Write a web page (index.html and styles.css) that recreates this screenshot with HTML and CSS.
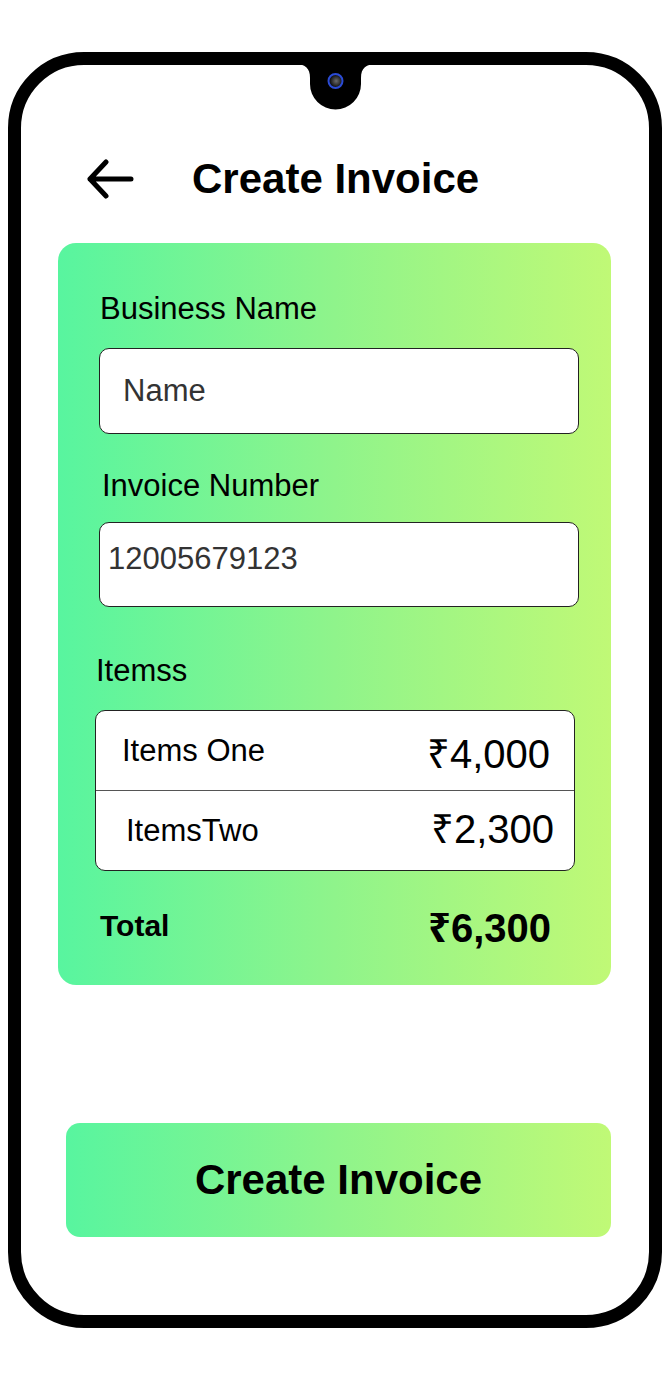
FILE: index.html
```html
<!DOCTYPE html>
<html lang="en">
<head>
  <meta charset="UTF-8" />
  <title>Create Invoice</title>
  <link rel="stylesheet" href="styles.css">
</head>
<body>
  <div class="phone">
    <svg class="notch" viewBox="295 64 84 47" width="84" height="47">
      <defs>
        <radialGradient id="lens" cx="0.55" cy="0.5" r="0.5">
          <stop offset="0" stop-color="#6b6b6b" />
          <stop offset="1" stop-color="#050505" />
        </radialGradient>
      </defs>
      <path d="M295 64 H377 C366 64 361 68 361 78 V84 A25.5 25.5 0 0 1 310 84 V78 C310 68 305 64 295 64 Z" fill="#000" />
      <circle cx="335.5" cy="81" r="7" fill="url(#lens)" stroke="#2b4bd4" stroke-width="2" />
    </svg>

    <div class="header">
      <svg class="back" viewBox="0 0 48 40" width="48" height="40">
        <path d="M45 20 H4 M20 3 L4 20 L20 37" fill="none" stroke="#000" stroke-width="5" stroke-linecap="round" stroke-linejoin="round" />
      </svg>
      <h1 class="title">Create Invoice</h1>
    </div>

    <div class="card">
      <label class="label label-business" for="businessName">Business Name</label>
      <div class="field field-name" id="businessName">Name</div>

      <label class="label label-invoice" for="invoiceNumber">Invoice Number</label>
      <div class="field field-number" id="invoiceNumber">12005679123</div>

      <div class="label label-items">Itemss</div>
      <div class="items">
        <div class="item item-one">
          <span>Items One</span>
          <span class="amount">₹4,000</span>
        </div>
        <div class="item item-two">
          <span>ItemsTwo</span>
          <span class="amount">₹2,300</span>
        </div>
      </div>

      <div class="total">
        <span class="total-label">Total</span>
        <span class="total-amount">₹6,300</span>
      </div>
    </div>

    <button class="create-btn">Create Invoice</button>
  </div>
</body>
</html>
```

FILE: styles.css
```css
* {
  box-sizing: border-box;
}
body {
  margin: 0;
  background: #fff;
  font-family: "Liberation Sans", "Noto Sans", Arial, sans-serif;
  color: #000;
}
.phone {
  position: relative;
  margin: 52px 0 0 8px;
  width: 654px;
  height: 1276px;
  border: 13px solid #000;
  border-radius: 76px;
  background: #fff;
}
.notch {
  position: absolute;
  left: 274px;
  top: -1px;
  display: block;
}
.header {
  display: flex;
  align-items: center;
  height: 48px;
  margin-top: 90px;
  padding-left: 65px;
}
.back {
  display: block;
  flex: none;
}
.title {
  margin: 0 0 0 58px;
  font-size: 42px;
  line-height: 48px;
  font-weight: bold;
}
.card {
  margin: 40px 0 0 37px;
  width: 553px;
  padding: 49px 0 37px;
  border-radius: 18px;
  background: linear-gradient(90deg, #58f59f 0%, #8ff48b 50%, #c0f976 100%);
}
.label {
  display: block;
  font-size: 31px;
  line-height: 34px;
}
.label-business {
  margin-left: 42px;
}
.label-invoice {
  margin: 35px 0 0 44px;
}
.label-items {
  margin: 47px 0 0 38px;
}
.field {
  width: 480px;
  margin-left: 41px;
  background: #fff;
  border: 1px solid #222;
  border-radius: 10px;
  font-size: 31px;
  line-height: 34px;
  color: #333;
}
.field-name {
  display: flex;
  align-items: center;
  height: 86px;
  margin-top: 22px;
  padding-left: 23px;
}
.field-number {
  height: 85px;
  margin-top: 19px;
  padding: 19px 0 0 8px;
}
.items {
  width: 480px;
  margin: 22px 0 0 37px;
  background: #fff;
  border: 1px solid #222;
  border-radius: 10px;
}
.item {
  display: flex;
  align-items: center;
  justify-content: space-between;
  font-size: 31px;
}
.item-one {
  height: 80px;
  padding: 0 24px 0 26px;
  border-bottom: 1px solid #555;
}
.item-two {
  height: 79px;
  padding: 0 20px 0 30px;
}
.amount {
  font-size: 40px;
}
.item-one .amount {
  margin-top: 4px;
}
.item-two .amount {
  margin-top: -6px;
}
.total {
  display: flex;
  align-items: center;
  justify-content: space-between;
  height: 44px;
  margin: 33px 60px 0 42px;
  font-weight: bold;
}
.total-label {
  font-size: 30px;
}
.total-amount {
  font-size: 40px;
}
.create-btn {
  display: block;
  margin: 138px 0 0 45px;
  width: 545px;
  height: 114px;
  border: none;
  border-radius: 14px;
  background: linear-gradient(90deg, #58f59f 0%, #8ff48b 50%, #c0f976 100%);
  font-family: "Liberation Sans", "Noto Sans", Arial, sans-serif;
  font-size: 42px;
  font-weight: bold;
  color: #000;
  cursor: pointer;
}
```
